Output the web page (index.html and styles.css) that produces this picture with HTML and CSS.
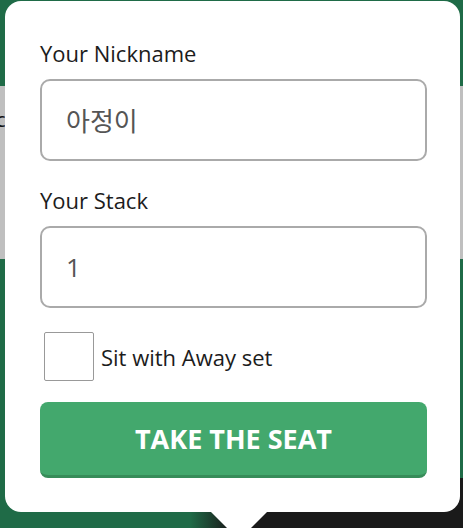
FILE: index.html
```html
<!DOCTYPE html>
<html>
<head>
  <title>Take a seat</title>
  <link rel="stylesheet" href="styles.css">
</head>
<body>
  <div class="scene">
    <span class="behind-text">c</span>
    <div class="seat-popup">
      <label class="field-label" for="nickname">Your Nickname</label>
      <input class="field-input" id="nickname" type="text" value="아정이">

      <label class="field-label second" for="stack">Your Stack</label>
      <input class="field-input" id="stack" type="text" value="1">

      <label class="away-row">
        <span class="away-box"></span>
        <span class="away-text">Sit with Away set</span>
      </label>

      <button class="take-seat-btn">TAKE THE SEAT</button>
    </div>
  </div>
</body>
</html>
```

FILE: styles.css
```css
* {
  box-sizing: border-box;
  margin: 0;
  padding: 0;
}
html, body {
  height: 100%;
}
body {
  font-family: "Open Sans", "Noto Sans CJK KR", sans-serif;
  overflow: hidden;
  background: #1a1a1a;
}
.scene {
  position: relative;
  height: 528px;
  padding-left: 5px;
  padding-top: 1px;
  background:
    linear-gradient(to right, #1f6b47 0, #1f6b47 190px, #1a1a1a 230px) 0 478px / 100% 50px no-repeat,
    linear-gradient(to bottom, #1f6b47 0, #1f6b47 86px, #bfbfbf 86px, #bfbfbf 259px, #1f6b47 259px, #1f6b47 478px, #1a1a1a 478px);
}
.behind-text {
  position: absolute;
  left: -4px;
  top: 106px;
  font-size: 20px;
  color: #111;
}
.seat-popup {
  position: relative;
  width: 455px;
  height: 511px;
  background-color: #fff;
  border-radius: 16px;
  padding: 40px 33px 0 35px;
}
.seat-popup::after {
  content: "";
  position: absolute;
  left: 205px;
  top: 510px;
  border-left: 29px solid transparent;
  border-right: 29px solid transparent;
  border-top: 29px solid #fff;
}
.field-label {
  display: block;
  font-size: 22px;
  line-height: 24px;
  color: #1c1c1c;
  margin-bottom: 14px;
}
.field-label.second {
  margin-top: 27px;
}
.field-input {
  display: block;
  width: 387px;
  height: 82px;
  border: 2px solid #aaa;
  border-radius: 10px;
  padding: 0 24px;
  font-family: "Open Sans", "Noto Sans CJK KR", sans-serif;
  font-size: 26px;
  color: #555;
  background: #fff;
  outline: none;
}
.away-row {
  display: flex;
  align-items: center;
  margin-top: 24px;
  margin-left: 4px;
}
.away-box {
  width: 50px;
  height: 49px;
  border: 1px solid #999;
  border-radius: 2px;
  margin-right: 7px;
}
.away-text {
  font-size: 22px;
  color: #1c1c1c;
}
.take-seat-btn {
  display: block;
  width: 387px;
  height: 76px;
  margin-top: 21px;
  border: none;
  border-bottom: 3px solid #378c59;
  border-radius: 8px;
  background-color: #43a86d;
  color: #fff;
  font-family: "Open Sans", sans-serif;
  font-weight: 700;
  font-size: 27px;
  cursor: pointer;
}
```
